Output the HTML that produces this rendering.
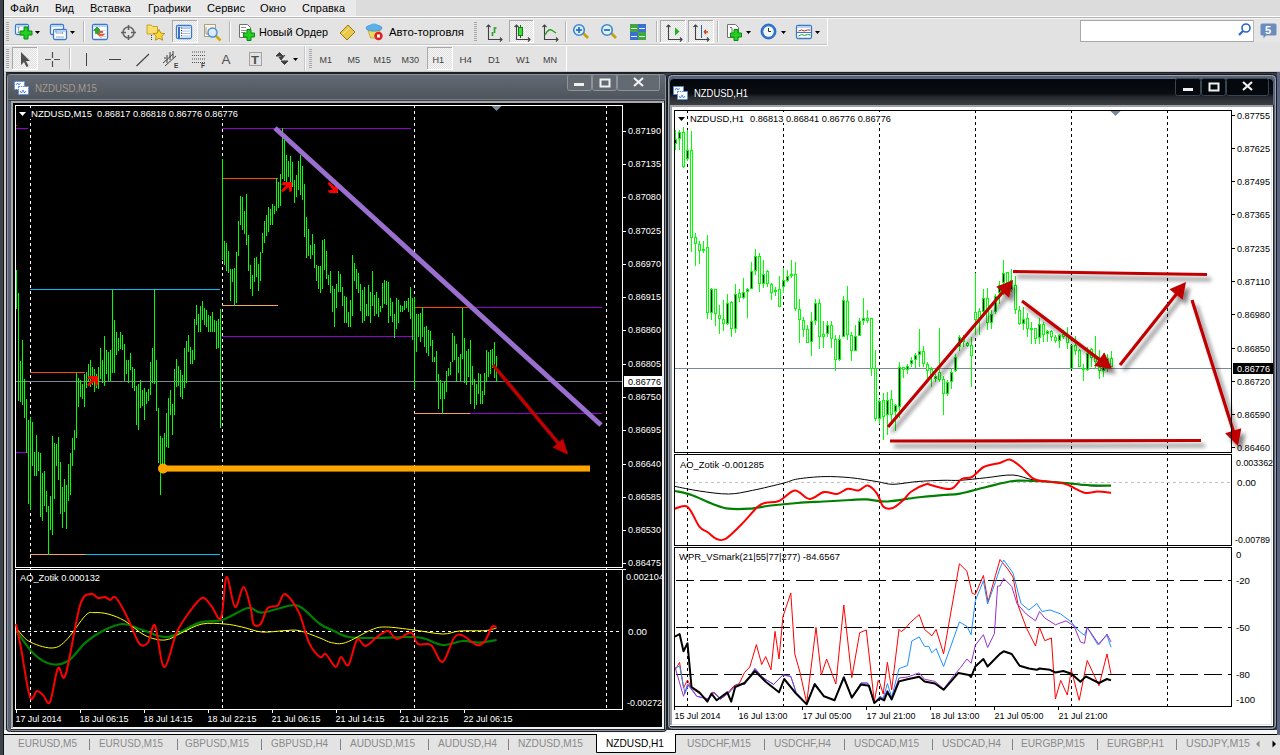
<!DOCTYPE html>
<html><head><meta charset="utf-8"><style>
html,body{margin:0;padding:0;width:1280px;height:755px;overflow:hidden;background:#dcdcdc}
svg{display:block;font-family:"Liberation Sans",sans-serif}
</style></head><body>
<svg width="1280" height="755" viewBox="0 0 1280 755">
<defs>
<filter id="sh" x="-20%" y="-30%" width="140%" height="160%"><feGaussianBlur in="SourceAlpha" stdDeviation="2.3"/><feOffset dx="4" dy="5"/><feComponentTransfer><feFuncA type="linear" slope="0.5"/></feComponentTransfer><feMerge><feMergeNode/><feMergeNode in="SourceGraphic"/></feMerge></filter>
<linearGradient id="gTitleL" x1="0" y1="0" x2="0" y2="1"><stop offset="0" stop-color="#646a73"/><stop offset="1" stop-color="#4e545c"/></linearGradient>
<linearGradient id="gTitleR" x1="0" y1="0" x2="0" y2="1"><stop offset="0" stop-color="#02050a"/><stop offset="0.5" stop-color="#0a0d12"/><stop offset="0.62" stop-color="#26292e"/><stop offset="1" stop-color="#45494f"/></linearGradient>
</defs>
<rect x="0" y="0" width="1280" height="755" fill="#dcdcdc" /><rect x="0" y="0" width="356" height="16" fill="#e9e9e9" /><rect x="356" y="0" width="924" height="16" fill="#dcdcdc" /><line x1="0" y1="16.5" x2="1280" y2="16.5" stroke="#ffffff" stroke-width="1" /><line x1="0" y1="17.5" x2="1280" y2="17.5" stroke="#b4b4b4" stroke-width="1" /><line x1="0" y1="18.5" x2="1280" y2="18.5" stroke="#f4f4f4" stroke-width="1" /><text x="10" y="12" fill="#000" font-size="11.5"  textLength="29" lengthAdjust="spacingAndGlyphs">Файл</text><text x="55" y="12" fill="#000" font-size="11.5"  textLength="19" lengthAdjust="spacingAndGlyphs">Вид</text><text x="90" y="12" fill="#000" font-size="11.5"  textLength="41" lengthAdjust="spacingAndGlyphs">Вставка</text><text x="148" y="12" fill="#000" font-size="11.5"  textLength="43" lengthAdjust="spacingAndGlyphs">Графики</text><text x="207" y="12" fill="#000" font-size="11.5"  textLength="38" lengthAdjust="spacingAndGlyphs">Сервис</text><text x="260" y="12" fill="#000" font-size="11.5"  textLength="26" lengthAdjust="spacingAndGlyphs">Окно</text><text x="302" y="12" fill="#000" font-size="11.5"  textLength="43" lengthAdjust="spacingAndGlyphs">Справка</text><rect x="0" y="19" width="1280" height="53" fill="#e2e2e2" /><rect x="4" y="19" width="824" height="25" fill="#e3e3e3" /><line x1="4" y1="44.5" x2="828" y2="44.5" stroke="#c4c4c4" stroke-width="1" /><line x1="4" y1="45.5" x2="828" y2="45.5" stroke="#ffffff" stroke-width="1" /><line x1="827.5" y1="19" x2="827.5" y2="45" stroke="#ffffff" stroke-width="1" /><rect x="4" y="46" width="563" height="25" fill="#e3e3e3" /><line x1="0" y1="71.5" x2="1280" y2="71.5" stroke="#c8c8c8" stroke-width="1" /><line x1="566.5" y1="46" x2="566.5" y2="71" stroke="#ffffff" stroke-width="1" /><line x1="304.5" y1="46" x2="304.5" y2="71" stroke="#c8c8c8" stroke-width="1" /><line x1="305.5" y1="46" x2="305.5" y2="71" stroke="#ffffff" stroke-width="1" /><line x1="6" y1="22.5" x2="9" y2="22.5" stroke="#a8a8a8" stroke-width="1" /><line x1="6" y1="24.5" x2="9" y2="24.5" stroke="#a8a8a8" stroke-width="1" /><line x1="6" y1="26.5" x2="9" y2="26.5" stroke="#a8a8a8" stroke-width="1" /><line x1="6" y1="28.5" x2="9" y2="28.5" stroke="#a8a8a8" stroke-width="1" /><line x1="6" y1="30.5" x2="9" y2="30.5" stroke="#a8a8a8" stroke-width="1" /><line x1="6" y1="32.5" x2="9" y2="32.5" stroke="#a8a8a8" stroke-width="1" /><line x1="6" y1="34.5" x2="9" y2="34.5" stroke="#a8a8a8" stroke-width="1" /><line x1="6" y1="36.5" x2="9" y2="36.5" stroke="#a8a8a8" stroke-width="1" /><line x1="6" y1="38.5" x2="9" y2="38.5" stroke="#a8a8a8" stroke-width="1" /><line x1="6" y1="40.5" x2="9" y2="40.5" stroke="#a8a8a8" stroke-width="1" /><line x1="6" y1="49.5" x2="9" y2="49.5" stroke="#a8a8a8" stroke-width="1" /><line x1="6" y1="51.5" x2="9" y2="51.5" stroke="#a8a8a8" stroke-width="1" /><line x1="6" y1="53.5" x2="9" y2="53.5" stroke="#a8a8a8" stroke-width="1" /><line x1="6" y1="55.5" x2="9" y2="55.5" stroke="#a8a8a8" stroke-width="1" /><line x1="6" y1="57.5" x2="9" y2="57.5" stroke="#a8a8a8" stroke-width="1" /><line x1="6" y1="59.5" x2="9" y2="59.5" stroke="#a8a8a8" stroke-width="1" /><line x1="6" y1="61.5" x2="9" y2="61.5" stroke="#a8a8a8" stroke-width="1" /><line x1="6" y1="63.5" x2="9" y2="63.5" stroke="#a8a8a8" stroke-width="1" /><line x1="6" y1="65.5" x2="9" y2="65.5" stroke="#a8a8a8" stroke-width="1" /><line x1="6" y1="67.5" x2="9" y2="67.5" stroke="#a8a8a8" stroke-width="1" /><line x1="309" y1="49.5" x2="312" y2="49.5" stroke="#a8a8a8" stroke-width="1" /><line x1="309" y1="51.5" x2="312" y2="51.5" stroke="#a8a8a8" stroke-width="1" /><line x1="309" y1="53.5" x2="312" y2="53.5" stroke="#a8a8a8" stroke-width="1" /><line x1="309" y1="55.5" x2="312" y2="55.5" stroke="#a8a8a8" stroke-width="1" /><line x1="309" y1="57.5" x2="312" y2="57.5" stroke="#a8a8a8" stroke-width="1" /><line x1="309" y1="59.5" x2="312" y2="59.5" stroke="#a8a8a8" stroke-width="1" /><line x1="309" y1="61.5" x2="312" y2="61.5" stroke="#a8a8a8" stroke-width="1" /><line x1="309" y1="63.5" x2="312" y2="63.5" stroke="#a8a8a8" stroke-width="1" /><line x1="309" y1="65.5" x2="312" y2="65.5" stroke="#a8a8a8" stroke-width="1" /><line x1="309" y1="67.5" x2="312" y2="67.5" stroke="#a8a8a8" stroke-width="1" /><line x1="474" y1="22.5" x2="477" y2="22.5" stroke="#a8a8a8" stroke-width="1" /><line x1="474" y1="24.5" x2="477" y2="24.5" stroke="#a8a8a8" stroke-width="1" /><line x1="474" y1="26.5" x2="477" y2="26.5" stroke="#a8a8a8" stroke-width="1" /><line x1="474" y1="28.5" x2="477" y2="28.5" stroke="#a8a8a8" stroke-width="1" /><line x1="474" y1="30.5" x2="477" y2="30.5" stroke="#a8a8a8" stroke-width="1" /><line x1="474" y1="32.5" x2="477" y2="32.5" stroke="#a8a8a8" stroke-width="1" /><line x1="474" y1="34.5" x2="477" y2="34.5" stroke="#a8a8a8" stroke-width="1" /><line x1="474" y1="36.5" x2="477" y2="36.5" stroke="#a8a8a8" stroke-width="1" /><line x1="474" y1="38.5" x2="477" y2="38.5" stroke="#a8a8a8" stroke-width="1" /><line x1="474" y1="40.5" x2="477" y2="40.5" stroke="#a8a8a8" stroke-width="1" /><line x1="83.5" y1="21" x2="83.5" y2="42" stroke="#b4b4b4" stroke-width="1" /><line x1="84.5" y1="21" x2="84.5" y2="42" stroke="#ffffff" stroke-width="1" /><line x1="229.5" y1="21" x2="229.5" y2="42" stroke="#b4b4b4" stroke-width="1" /><line x1="230.5" y1="21" x2="230.5" y2="42" stroke="#ffffff" stroke-width="1" /><line x1="565.5" y1="21" x2="565.5" y2="42" stroke="#b4b4b4" stroke-width="1" /><line x1="566.5" y1="21" x2="566.5" y2="42" stroke="#ffffff" stroke-width="1" /><line x1="656.5" y1="21" x2="656.5" y2="42" stroke="#b4b4b4" stroke-width="1" /><line x1="657.5" y1="21" x2="657.5" y2="42" stroke="#ffffff" stroke-width="1" /><line x1="717.5" y1="21" x2="717.5" y2="42" stroke="#b4b4b4" stroke-width="1" /><line x1="718.5" y1="21" x2="718.5" y2="42" stroke="#ffffff" stroke-width="1" /><line x1="69.5" y1="48" x2="69.5" y2="69" stroke="#b4b4b4" stroke-width="1" /><line x1="70.5" y1="48" x2="70.5" y2="69" stroke="#ffffff" stroke-width="1" /><defs><pattern id="dots" width="2" height="2" patternUnits="userSpaceOnUse"><rect width="2" height="2" fill="#f6f6f6"/><rect width="1" height="1" fill="#e0e0e0"/><rect x="1" y="1" width="1" height="1" fill="#e0e0e0"/></pattern></defs><rect x="172" y="20" width="26" height="23" fill="url(#dots)" /><line x1="172" y1="20.5" x2="198" y2="20.5" stroke="#a8a8a8" stroke-width="1" /><line x1="172.5" y1="20" x2="172.5" y2="43" stroke="#a8a8a8" stroke-width="1" /><line x1="172" y1="42.5" x2="198" y2="42.5" stroke="#ffffff" stroke-width="1" /><line x1="197.5" y1="20" x2="197.5" y2="43" stroke="#ffffff" stroke-width="1" /><rect x="509" y="20" width="25" height="23" fill="url(#dots)" /><line x1="509" y1="20.5" x2="534" y2="20.5" stroke="#a8a8a8" stroke-width="1" /><line x1="509.5" y1="20" x2="509.5" y2="43" stroke="#a8a8a8" stroke-width="1" /><line x1="509" y1="42.5" x2="534" y2="42.5" stroke="#ffffff" stroke-width="1" /><line x1="533.5" y1="20" x2="533.5" y2="43" stroke="#ffffff" stroke-width="1" /><rect x="660" y="20" width="26" height="23" fill="url(#dots)" /><line x1="660" y1="20.5" x2="686" y2="20.5" stroke="#a8a8a8" stroke-width="1" /><line x1="660.5" y1="20" x2="660.5" y2="43" stroke="#a8a8a8" stroke-width="1" /><line x1="660" y1="42.5" x2="686" y2="42.5" stroke="#ffffff" stroke-width="1" /><line x1="685.5" y1="20" x2="685.5" y2="43" stroke="#ffffff" stroke-width="1" /><rect x="688" y="20" width="26" height="23" fill="url(#dots)" /><line x1="688" y1="20.5" x2="714" y2="20.5" stroke="#a8a8a8" stroke-width="1" /><line x1="688.5" y1="20" x2="688.5" y2="43" stroke="#a8a8a8" stroke-width="1" /><line x1="688" y1="42.5" x2="714" y2="42.5" stroke="#ffffff" stroke-width="1" /><line x1="713.5" y1="20" x2="713.5" y2="43" stroke="#ffffff" stroke-width="1" /><rect x="12" y="47" width="26" height="23" fill="url(#dots)" /><line x1="12" y1="47.5" x2="38" y2="47.5" stroke="#a8a8a8" stroke-width="1" /><line x1="12.5" y1="47" x2="12.5" y2="70" stroke="#a8a8a8" stroke-width="1" /><line x1="12" y1="69.5" x2="38" y2="69.5" stroke="#ffffff" stroke-width="1" /><line x1="37.5" y1="47" x2="37.5" y2="70" stroke="#ffffff" stroke-width="1" /><rect x="427" y="47" width="26" height="23" fill="url(#dots)" /><line x1="427" y1="47.5" x2="453" y2="47.5" stroke="#a8a8a8" stroke-width="1" /><line x1="427.5" y1="47" x2="427.5" y2="70" stroke="#a8a8a8" stroke-width="1" /><line x1="427" y1="69.5" x2="453" y2="69.5" stroke="#ffffff" stroke-width="1" /><line x1="452.5" y1="47" x2="452.5" y2="70" stroke="#ffffff" stroke-width="1" /><rect x="15.5" y="24.5" width="13" height="10" rx="1.5" fill="#ffffff" stroke="#3a78c8" stroke-width="1.3"/><rect x="16" y="25" width="12" height="2" fill="#b8d4f4"/><path d="M18.5,27 v6 M17.5,28 l1,-1 1,1 M17.5,32 l1,1 1,-1" stroke="#7090b0" stroke-width="0.8" fill="none"/><path d="M24.0,27.0 h4 v4.0 h4.0 v4 h-4.0 v4.0 h-4 v-4.0 h-4.0 v-4 h4.0 z" fill="#22d022" stroke="#0a8a0a" stroke-width="1"/><path d="M35,31 h5 l-2.5,3 z" fill="#000"/><rect x="50.5" y="24.5" width="13" height="10" rx="1.5" fill="#ffffff" stroke="#3a78c8" stroke-width="1.3"/><rect x="51" y="25" width="12" height="2" fill="#b8d4f4"/><rect x="53.5" y="29.5" width="13" height="10" rx="1.5" fill="#ffffff" stroke="#3a78c8" stroke-width="1.3"/><rect x="54" y="30" width="12" height="2" fill="#b8d4f4"/><path d="M56,33 v-4 M55,30 l1,-1 1,1 M56,33 h7 M62,32 l1,1 -1,1 M56,37 h8" stroke="#7090b0" stroke-width="0.8" fill="none"/><path d="M70,31 h5 l-2.5,3 z" fill="#000"/><rect x="92.5" y="24.5" width="15" height="15" rx="1.5" fill="#ffffff" stroke="#3a78c8" stroke-width="1.3"/><rect x="93" y="25" width="14" height="2" fill="#b8d4f4"/><path d="M97,27 l3.5,3.5 h-2 v3 h-3 v-3 h-2 z" fill="#22b022" stroke="#107010" stroke-width="0.6"/><path d="M101,37.5 l3.5,-3.5 h-2 v-3 h-3 v3 h-2 z" fill="#f06030" stroke="#c03010" stroke-width="0.6"/><line x1="100" y1="30.5" x2="106" y2="30.5" stroke="#d0d8e0" stroke-width="1" /><line x1="100" y1="33.5" x2="106" y2="33.5" stroke="#d0d8e0" stroke-width="1" /><line x1="100" y1="36.5" x2="106" y2="36.5" stroke="#d0d8e0" stroke-width="1" /><circle cx="128.5" cy="32.5" r="5.5" fill="none" stroke="#686868" stroke-width="1.5"/><path d="M128.5,25 v5 M128.5,35 v5 M121,32.5 h5 M131,32.5 h5" stroke="#606060" stroke-width="1.5"/><path d="M147,25 h4 l1.5,1.5 h5 v7.5 h-10.5 z" fill="#f8e070" stroke="#c8a030" stroke-width="1"/><path d="M159,29.5 l1.8,3.6 3.9,0.5 -2.9,2.7 0.8,3.9 -3.6,-1.9 -3.6,1.9 0.8,-3.9 -2.9,-2.7 3.9,-0.5 z" fill="#f8d838" stroke="#b88a10" stroke-width="0.9"/><rect x="151" y="35" width="1" height="1" fill="#404040" /><rect x="151" y="37" width="1" height="1" fill="#404040" /><rect x="151" y="39" width="1" height="1" fill="#404040" /><rect x="176.5" y="25.5" width="15" height="13" rx="1.5" fill="#ffffff" stroke="#3a78c8" stroke-width="1.3"/><rect x="177" y="26" width="14" height="2" fill="#b8d4f4"/><rect x="178" y="27" width="2" height="11" fill="#3a70c0" /><line x1="181" y1="28.5" x2="190" y2="28.5" stroke="#a8c0e8" stroke-width="1" /><rect x="181" y="27.5" width="1" height="1" fill="#e02020" /><line x1="181" y1="31.0" x2="190" y2="31.0" stroke="#a8c0e8" stroke-width="1" /><rect x="181" y="30.0" width="1" height="1" fill="#202020" /><line x1="181" y1="33.5" x2="190" y2="33.5" stroke="#a8c0e8" stroke-width="1" /><rect x="181" y="32.5" width="1" height="1" fill="#202020" /><line x1="181" y1="36.0" x2="190" y2="36.0" stroke="#a8c0e8" stroke-width="1" /><rect x="181" y="35.0" width="1" height="1" fill="#e02020" /><rect x="204.5" y="24.5" width="11" height="12" fill="#f8f4e8" stroke="#b0a080"/><path d="M206,27 v7 h7" stroke="#909090" fill="none" stroke-width="0.8"/><path d="M215.5,35.5 l5,5" stroke="#d0a810" stroke-width="2.6"/><circle cx="212.5" cy="32.5" r="4.5" fill="#d8ecfc" fill-opacity="0.85" stroke="#4a90d8" stroke-width="1.4"/><path d="M239.5,24.5 h8 l3,3 v10 h-11 z" fill="#fff" stroke="#707070"/><line x1="241" y1="27.5" x2="246" y2="27.5" stroke="#909090" stroke-width="1" /><line x1="241" y1="30.5" x2="247" y2="30.5" stroke="#909090" stroke-width="1" /><line x1="241" y1="32.5" x2="245" y2="32.5" stroke="#909090" stroke-width="1" /><path d="M247.0,29.5 h4 v3.5 h3.5 v4 h-3.5 v3.5 h-4 v-3.5 h-3.5 v-4 h3.5 z" fill="#22d022" stroke="#0a8a0a" stroke-width="1"/><text x="259" y="36" fill="#000" font-size="11.5"  textLength="69" lengthAdjust="spacingAndGlyphs">Новый Ордер</text><path d="M340,33 l8,-8 l7,7 l-8,8 z" fill="#e8c848" stroke="#a07818" stroke-width="1"/><path d="M343,34 l6,-6" stroke="#f8e8a0" stroke-width="1"/><path d="M368,30 l12,0 l-1.5,8 h-8 z" fill="#f0d860" stroke="#c0a030" stroke-width="0.8"/><ellipse cx="374" cy="28" rx="8" ry="3.2" fill="#5ab0e8" stroke="#3080c0" stroke-width="0.6"/><ellipse cx="374" cy="26" rx="4" ry="2.6" fill="#5ab0e8"/><circle cx="378.5" cy="36" r="4.2" fill="#e02020"/><rect x="377" y="34.5" width="3" height="3" fill="#fff"/><text x="389" y="36" fill="#000" font-size="11.5"  textLength="75" lengthAdjust="spacingAndGlyphs">Авто-торговля</text><path d="M488.5,25 v14.5 h13.5 M486.5,27 l2,-2 2,2 M500,37.5 l2,2 -2,2" fill="none" stroke="#404040" stroke-width="1.1"/><path d="M492.5,36 v-4 M494.5,33 v-5 h2" fill="none" stroke="#20a020" stroke-width="1.6"/><path d="M516.5,25 v14.5 h13.5 M514.5,27 l2,-2 2,2 M528,37.5 l2,2 -2,2" fill="none" stroke="#404040" stroke-width="1.1"/><line x1="520.5" y1="25" x2="520.5" y2="38" stroke="#107010" stroke-width="1" /><rect x="518.5" y="27.5" width="4" height="8" fill="#40e040" stroke="#108010"/><path d="M544.5,25 v14.5 h13.5 M542.5,27 l2,-2 2,2 M556,37.5 l2,2 -2,2" fill="none" stroke="#404040" stroke-width="1.1"/><path d="M545,35 q4,-8 8,-4 l3,2" fill="none" stroke="#20a020" stroke-width="1.4"/><path d="M583,33 l5,5" stroke="#c8a010" stroke-width="2.8"/><circle cx="579" cy="30" r="5.3" fill="#e0f0ff" stroke="#3a88d0" stroke-width="1.6"/><path d="M576,30 h6" stroke="#2a70c0" stroke-width="1.8"/><path d="M579,27 v6" stroke="#2a70c0" stroke-width="1.8"/><path d="M611,33 l5,5" stroke="#c8a010" stroke-width="2.8"/><circle cx="607" cy="30" r="5.3" fill="#e0f0ff" stroke="#3a88d0" stroke-width="1.6"/><path d="M604,30 h6" stroke="#2a70c0" stroke-width="1.8"/><rect x="630" y="24" width="8" height="8" fill="#40a840" /><rect x="638" y="24" width="8" height="8" fill="#3a70d0" /><rect x="630" y="32" width="8" height="8" fill="#3a70d0" /><rect x="638" y="32" width="8" height="8" fill="#40a840" /><line x1="631" y1="28.5" x2="637" y2="28.5" stroke="#f0f0f0" stroke-width="1" /><line x1="639" y1="28.5" x2="645" y2="28.5" stroke="#f0f0f0" stroke-width="1" /><line x1="631" y1="36.5" x2="637" y2="36.5" stroke="#f0f0f0" stroke-width="1" /><line x1="639" y1="36.5" x2="645" y2="36.5" stroke="#f0f0f0" stroke-width="1" /><path d="M668.5,25 v14.5 h13.5 M666.5,27 l2,-2 2,2 M680,37.5 l2,2 -2,2" fill="none" stroke="#404040" stroke-width="1.1"/><path d="M675,27.5 l4.5,4 l-4.5,4 z" fill="#20b020"/><path d="M695.5,25 v14.5 h13.5 M693.5,27 l2,-2 2,2 M707,37.5 l2,2 -2,2" fill="none" stroke="#404040" stroke-width="1.1"/><line x1="701.5" y1="25" x2="701.5" y2="38" stroke="#2060b0" stroke-width="1" /><path d="M708,32 h-4 M704,32 l2,-2 M704,32 l2,2" stroke="#d04010" stroke-width="1.3" fill="none"/><path d="M727.5,24.5 h8 l3,3 v10 h-11 z" fill="#fff" stroke="#707070"/><path d="M730,28 q1,-2 2,0 v6" stroke="#606060" fill="none" stroke-width="0.9"/><path d="M734.0,29.5 h4 v3.5 h3.5 v4 h-3.5 v3.5 h-4 v-3.5 h-3.5 v-4 h3.5 z" fill="#22d022" stroke="#0a8a0a" stroke-width="1"/><path d="M746,31 h5 l-2.5,3 z" fill="#000"/><circle cx="768.5" cy="31.5" r="7.5" fill="#2a7ad8" stroke="#1a5ab0" stroke-width="0.8"/><circle cx="768.5" cy="31.5" r="5.2" fill="#f8f8f8"/><path d="M768.5,28 v3.5 h2.5" stroke="#303030" stroke-width="1" fill="none"/><path d="M781,31 h5 l-2.5,3 z" fill="#000"/><rect x="796.5" y="25.5" width="15" height="13" rx="1.5" fill="#ffffff" stroke="#3a78c8" stroke-width="1.3"/><rect x="797" y="26" width="14" height="2" fill="#b8d4f4"/><path d="M798.5,31 l3,-1 3,1 3,-1 3,0" stroke="#b03020" fill="none" stroke-width="1"/><path d="M798.5,36 l3,-1.5 3,1 3,-1 3,0.5" stroke="#20a020" fill="none" stroke-width="1"/><line x1="797" y1="32.5" x2="811" y2="32.5" stroke="#3a78c8" stroke-width="1" /><path d="M815,31 h5 l-2.5,3 z" fill="#000"/><rect x="1080.5" y="20.5" width="173" height="21" fill="#ffffff" stroke="#a8a8a8"/><circle cx="1246" cy="28" r="4" fill="none" stroke="#2a64c8" stroke-width="1.6"/><path d="M1243,31 l-4,4" stroke="#2a64c8" stroke-width="2.2"/><rect x="1254" y="20" width="26" height="22" fill="#e6e6e6" /><line x1="1253.5" y1="20" x2="1253.5" y2="42" stroke="#b8b8b8" stroke-width="1" /><path d="M1262,23.5 h13 a1.5,1.5 0 0 1 1.5,1.5 v9 a1.5,1.5 0 0 1 -1.5,1.5 h-9 l-2.5,3 v-3 h-1.5 a1.5,1.5 0 0 1 -1.5,-1.5 v-9 a1.5,1.5 0 0 1 1.5,-1.5 z" fill="#6c8cc0"/><text x="1265" y="34" fill="#fff" font-size="11" font-weight="bold">5</text><path d="M21,52 v13 l3,-3 l2.5,5 l2,-1 l-2.5,-5 h4 z" fill="#505050"/><path d="M52.5,52 v6 M52.5,61 v6 M45,59.5 h6 M54,59.5 h6" stroke="#505050" stroke-width="1.2"/><line x1="86.5" y1="53" x2="86.5" y2="66" stroke="#404040" stroke-width="1" /><line x1="109" y1="59.5" x2="121" y2="59.5" stroke="#404040" stroke-width="1" /><path d="M136.5,66 l12.5,-12" stroke="#404040" stroke-width="1.1"/><path d="M163,63 l10,-9 M165,66 l11,-10 M164,58 l2,0 M167,55 v8 M170,52 v8 M173,51 v7" stroke="#404040" stroke-width="1" fill="none"/><text x="174" y="68" fill="#404040" font-size="6.5" font-weight="bold">E</text><path d="M192,52 h13" stroke="#505050" stroke-width="1" stroke-dasharray="1,1"/><path d="M192,55.5 h13" stroke="#505050" stroke-width="1" stroke-dasharray="1,1"/><path d="M192,59 h13" stroke="#505050" stroke-width="1" stroke-dasharray="1,1"/><path d="M192,62.5 h13" stroke="#505050" stroke-width="1" stroke-dasharray="1,1"/><text x="201" y="68" fill="#404040" font-size="6.5" font-weight="bold">F</text><text x="221.5" y="64" fill="#505050" font-size="12"  textLength="9" lengthAdjust="spacingAndGlyphs">A</text><rect x="249.5" y="52.5" width="12" height="13" fill="none" stroke="#606060" stroke-dasharray="1,1"/><text x="251" y="63.5" fill="#505050" font-size="11" font-weight="bold" textLength="8" lengthAdjust="spacingAndGlyphs">T</text><path d="M276,56 l3.5,-3.5 3.5,3.5 z M281,61 l3.5,3.5 3.5,-3.5 z M279,57 l2,3 4,-5" fill="#404040" stroke="#404040" stroke-width="1"/><path d="M293,58 h5 l-2.5,3 z" fill="#000"/><text x="319.5" y="63" fill="#404040" font-size="9.5"  textLength="12.5" lengthAdjust="spacingAndGlyphs">M1</text><text x="347.5" y="63" fill="#404040" font-size="9.5"  textLength="12.5" lengthAdjust="spacingAndGlyphs">M5</text><text x="373.5" y="63" fill="#404040" font-size="9.5"  textLength="17.5" lengthAdjust="spacingAndGlyphs">M15</text><text x="401.5" y="63" fill="#404040" font-size="9.5"  textLength="17.5" lengthAdjust="spacingAndGlyphs">M30</text><text x="432.5" y="63" fill="#404040" font-size="9.5"  textLength="11.5" lengthAdjust="spacingAndGlyphs">H1</text><text x="459.5" y="63" fill="#404040" font-size="9.5"  textLength="12.5" lengthAdjust="spacingAndGlyphs">H4</text><text x="488" y="63" fill="#404040" font-size="9.5"  textLength="12" lengthAdjust="spacingAndGlyphs">D1</text><text x="516" y="63" fill="#404040" font-size="9.5"  textLength="14" lengthAdjust="spacingAndGlyphs">W1</text><text x="543" y="63" fill="#404040" font-size="9.5"  textLength="14" lengthAdjust="spacingAndGlyphs">MN</text><rect x="0" y="72" width="1280" height="661" fill="#3a3f47" /><line x1="0" y1="72.5" x2="1280" y2="72.5" stroke="#1c1f24" stroke-width="1" /><rect x="4" y="72" width="2" height="661" fill="#c8c8c8" /><rect x="0" y="730" width="1280" height="4" fill="#f6f6f6" /><rect x="0" y="735" width="1280" height="20" fill="#e3e3e3" /><line x1="4" y1="734.5" x2="1280" y2="734.5" stroke="#000000" stroke-width="1" /><rect x="0" y="0" width="4" height="755" fill="#3e434b" /><line x1="3.5" y1="0" x2="3.5" y2="755" stroke="#121418" stroke-width="1" /><rect x="1277" y="72" width="3" height="663" fill="#5a6480" /><line x1="89.5" y1="739" x2="89.5" y2="750" stroke="#808080" stroke-width="1" /><line x1="177.5" y1="739" x2="177.5" y2="750" stroke="#808080" stroke-width="1" /><line x1="261.5" y1="739" x2="261.5" y2="750" stroke="#808080" stroke-width="1" /><line x1="340.5" y1="739" x2="340.5" y2="750" stroke="#808080" stroke-width="1" /><line x1="428.5" y1="739" x2="428.5" y2="750" stroke="#808080" stroke-width="1" /><line x1="508.5" y1="739" x2="508.5" y2="750" stroke="#808080" stroke-width="1" /><line x1="764.5" y1="739" x2="764.5" y2="750" stroke="#808080" stroke-width="1" /><line x1="844.5" y1="739" x2="844.5" y2="750" stroke="#808080" stroke-width="1" /><line x1="932.5" y1="739" x2="932.5" y2="750" stroke="#808080" stroke-width="1" /><line x1="1012.5" y1="739" x2="1012.5" y2="750" stroke="#808080" stroke-width="1" /><line x1="1097.5" y1="739" x2="1097.5" y2="750" stroke="#808080" stroke-width="1" /><line x1="1176.5" y1="739" x2="1176.5" y2="750" stroke="#808080" stroke-width="1" /><text x="18" y="747" fill="#8a8a8a" font-size="11.5"  textLength="59" lengthAdjust="spacingAndGlyphs">EURUSD,M5</text><text x="99" y="747" fill="#8a8a8a" font-size="11.5"  textLength="64" lengthAdjust="spacingAndGlyphs">EURUSD,M15</text><text x="185" y="747" fill="#8a8a8a" font-size="11.5"  textLength="64" lengthAdjust="spacingAndGlyphs">GBPUSD,M15</text><text x="271" y="747" fill="#8a8a8a" font-size="11.5"  textLength="57" lengthAdjust="spacingAndGlyphs">GBPUSD,H4</text><text x="350" y="747" fill="#8a8a8a" font-size="11.5"  textLength="65" lengthAdjust="spacingAndGlyphs">AUDUSD,M15</text><text x="438" y="747" fill="#8a8a8a" font-size="11.5"  textLength="59" lengthAdjust="spacingAndGlyphs">AUDUSD,H4</text><text x="518" y="747" fill="#8a8a8a" font-size="11.5"  textLength="65" lengthAdjust="spacingAndGlyphs">NZDUSD,M15</text><rect x="596" y="733" width="80" height="20" fill="#ffffff" /><path d="M596.5,734 v18.5 h79 v-18.5" fill="none" stroke="#000" stroke-width="1"/><text x="606" y="747" fill="#000" font-size="11.5"  textLength="58" lengthAdjust="spacingAndGlyphs">NZDUSD,H1</text><text x="687" y="747" fill="#8a8a8a" font-size="11.5"  textLength="64" lengthAdjust="spacingAndGlyphs">USDCHF,M15</text><text x="774" y="747" fill="#8a8a8a" font-size="11.5"  textLength="57" lengthAdjust="spacingAndGlyphs">USDCHF,H4</text><text x="854" y="747" fill="#8a8a8a" font-size="11.5"  textLength="65" lengthAdjust="spacingAndGlyphs">USDCAD,M15</text><text x="942" y="747" fill="#8a8a8a" font-size="11.5"  textLength="59" lengthAdjust="spacingAndGlyphs">USDCAD,H4</text><text x="1021" y="747" fill="#8a8a8a" font-size="11.5"  textLength="64" lengthAdjust="spacingAndGlyphs">EURGBP,M15</text><text x="1107" y="747" fill="#8a8a8a" font-size="11.5"  textLength="57" lengthAdjust="spacingAndGlyphs">EURGBP,H1</text><text x="1186" y="747" fill="#8a8a8a" font-size="11.5"  textLength="64" lengthAdjust="spacingAndGlyphs">USDJPY,M15</text><path d="M1256,744 l3.5,-3.5 v7 z" fill="#909090"/><path d="M1272.5,740.5 l3.5,3.5 -3.5,3.5 z" fill="#000"/><rect x="6.5" y="73.5" width="660" height="658" rx="3" fill="#58627a" stroke="#1e2126"/><rect x="7.5" y="74.5" width="658" height="656" rx="3" fill="none" stroke="#8a919c"/><rect x="8" y="75" width="657" height="25" fill="url(#gTitleL)" /><line x1="8" y1="99.5" x2="665" y2="99.5" stroke="#767c84" stroke-width="1" /><line x1="8" y1="100.5" x2="665" y2="100.5" stroke="#3a3f47" stroke-width="1" /><rect x="567.5" y="74.5" width="24" height="16" rx="2" fill="#646a72" stroke="#8e949c"/><rect x="592.5" y="74.5" width="24" height="16" rx="2" fill="#646a72" stroke="#8e949c"/><rect x="617.5" y="74.5" width="42" height="16" rx="2" fill="#646a72" stroke="#8e949c"/><rect x="574" y="83" width="10" height="3" fill="#f0f0f0" /><rect x="600.5" y="79.5" width="9" height="7" fill="none" stroke="#f0f0f0" stroke-width="2"/><path d="M634,78 l9,8 M643,78 l-9,8" stroke="#f0f0f0" stroke-width="2.2"/><rect x="14.5" y="81.5" width="10" height="8" fill="#fff" stroke="#4a8af0" stroke-dasharray="1.5,0.8"/><rect x="18.5" y="86.5" width="10" height="8" fill="#fff" stroke="#4a8af0" stroke-dasharray="1.5,0.8"/><path d="M20,91 l1.5,2 1.5,-3 1.5,3 1.5,-2" fill="none" stroke="#3a6ad0" stroke-width="0.8"/><path d="M16,85 l1.5,-2 1.5,2 1.5,-2" fill="none" stroke="#3a6ad0" stroke-width="0.8"/><text x="35" y="92" fill="#a39a8c" font-size="11"  textLength="62" lengthAdjust="spacingAndGlyphs">NZDUSD,M15</text><rect x="10" y="101" width="1" height="631" fill="#5a606a" /><rect x="11" y="101" width="653" height="628" fill="#f0f0f0" /><rect x="11" y="101" width="653" height="2" fill="#a8a8a8" /><rect x="11" y="101" width="2" height="627" fill="#a8a8a8" /><rect x="13" y="103" width="649" height="624" fill="#000000" /><line x1="11" y1="729.5" x2="665" y2="729.5" stroke="#202328" stroke-width="1" /><line x1="664.5" y1="101" x2="664.5" y2="730" stroke="#202328" stroke-width="1" /><rect x="667.5" y="74.5" width="609" height="655" rx="4" fill="#58627a" stroke="#15181c"/><rect x="668.5" y="75.5" width="607" height="653" rx="4" fill="none" stroke="#9aa0a8"/><rect x="669.5" y="78.5" width="604" height="30" rx="4" fill="url(#gTitleR)" stroke="#5a6a80"/><rect x="1175.5" y="78.5" width="25" height="17" rx="2" fill="#05080c" stroke="#3c4450"/><rect x="1201.5" y="78.5" width="24" height="17" rx="2" fill="#05080c" stroke="#3c4450"/><rect x="1226.5" y="78.5" width="42" height="17" rx="2" fill="#05080c" stroke="#3c4450"/><rect x="1183" y="88" width="10" height="3" fill="#f0f0f0" /><rect x="1209.5" y="83.5" width="9" height="7" fill="none" stroke="#f0f0f0" stroke-width="2"/><path d="M1243,82 l9,8 M1252,82 l-9,8" stroke="#f0f0f0" stroke-width="2.2"/><rect x="673.5" y="86.5" width="10" height="8" fill="#fff" stroke="#4a8af0" stroke-dasharray="1.5,0.8"/><rect x="677.5" y="91.5" width="10" height="8" fill="#fff" stroke="#4a8af0" stroke-dasharray="1.5,0.8"/><path d="M679,96 l1.5,2 1.5,-3 1.5,3 1.5,-2" fill="none" stroke="#3a6ad0" stroke-width="0.8"/><path d="M675,90 l1.5,-2 1.5,2 1.5,-2" fill="none" stroke="#3a6ad0" stroke-width="0.8"/><text x="694" y="97" fill="#ffffff" font-size="11"  textLength="54" lengthAdjust="spacingAndGlyphs">NZDUSD,H1</text><rect x="670" y="105" width="603" height="621" fill="#ffffff" /><rect x="670" y="105" width="603" height="2" fill="#a0a0a0" /><rect x="670" y="105" width="2" height="620" fill="#a0a0a0" /><line x1="672" y1="724.5" x2="1272" y2="724.5" stroke="#e0e0e0" stroke-width="1" /><line x1="1271.5" y1="107" x2="1271.5" y2="725" stroke="#e0e0e0" stroke-width="1" /><line x1="670" y1="726.5" x2="1274" y2="726.5" stroke="#202328" stroke-width="1" /><line x1="1273.5" y1="105" x2="1273.5" y2="727" stroke="#202328" stroke-width="1" /><g stroke="#ffffff" stroke-width="1" stroke-dasharray="3,3" stroke-dashoffset="1" shape-rendering="crispEdges"><line x1="30.5" y1="106" x2="30.5" y2="709"/><line x1="222.5" y1="106" x2="222.5" y2="709"/><line x1="414.5" y1="106" x2="414.5" y2="709"/><line x1="606.5" y1="106" x2="606.5" y2="709"/></g><line x1="16" y1="631.5" x2="622" y2="631.5" stroke="#ffffff" stroke-dasharray="3,3" shape-rendering="crispEdges"/><line x1="16" y1="381.5" x2="622" y2="381.5" stroke="#778899" shape-rendering="crispEdges"/><line x1="16" y1="128.5" x2="28" y2="128.5" stroke="#9400d3" stroke-width="1" shape-rendering="crispEdges"/><line x1="222" y1="128.5" x2="411" y2="128.5" stroke="#9400d3" stroke-width="1" shape-rendering="crispEdges"/><line x1="30" y1="289.5" x2="220" y2="289.5" stroke="#00bfff" stroke-width="1" shape-rendering="crispEdges"/><line x1="222" y1="178.5" x2="278" y2="178.5" stroke="#ff4500" stroke-width="1" shape-rendering="crispEdges"/><line x1="222" y1="305.5" x2="278" y2="305.5" stroke="#f4a460" stroke-width="1" shape-rendering="crispEdges"/><line x1="222" y1="336.5" x2="414" y2="336.5" stroke="#9400d3" stroke-width="1" shape-rendering="crispEdges"/><line x1="30" y1="372.5" x2="85" y2="372.5" stroke="#ff4500" stroke-width="1" shape-rendering="crispEdges"/><line x1="16" y1="452.5" x2="28" y2="452.5" stroke="#9400d3" stroke-width="1" shape-rendering="crispEdges"/><line x1="30" y1="554.5" x2="86" y2="554.5" stroke="#f4a460" stroke-width="1" shape-rendering="crispEdges"/><line x1="86" y1="554.5" x2="220" y2="554.5" stroke="#00bfff" stroke-width="1" shape-rendering="crispEdges"/><line x1="414" y1="307.5" x2="468" y2="307.5" stroke="#ff4500" stroke-width="1" shape-rendering="crispEdges"/><line x1="468" y1="307.5" x2="602" y2="307.5" stroke="#9400d3" stroke-width="1" shape-rendering="crispEdges"/><line x1="414" y1="413.5" x2="470" y2="413.5" stroke="#f4a460" stroke-width="1" shape-rendering="crispEdges"/><line x1="470" y1="413.5" x2="602" y2="413.5" stroke="#9400d3" stroke-width="1" shape-rendering="crispEdges"/><rect x="16" y="125" width="1" height="1" fill="#ff0000"/><path d="M16.5,270V309M18.5,293V401M20.5,361V402M22.5,340V405M24.5,379V418M26.5,399V453M28.5,420V504M30.5,417V510M32.5,422V466M34.5,452V476M36.5,435V476M38.5,452V471M40.5,453V517M42.5,473V521M44.5,471V506M46.5,491V512M48.5,506V555M50.5,496V530M52.5,436V535M54.5,443V499M56.5,444V466M58.5,437V480M60.5,462V514M62.5,487V528M64.5,479V512M66.5,485V529M68.5,464V501M70.5,453V495M72.5,438V466M74.5,430V450M76.5,373V438M78.5,378V407M80.5,380V397M82.5,384V399M84.5,374V407M86.5,372V388M88.5,364V381M90.5,360V387M92.5,367V385M94.5,369V392M96.5,374V388M98.5,367V389M100.5,348V379M102.5,360V383M104.5,336V386M106.5,350V374M108.5,352V381M110.5,350V381M112.5,290V373M114.5,320V373M116.5,332V355M118.5,338V351M120.5,332V349M122.5,335V350M124.5,344V381M126.5,360V374M128.5,360V383M130.5,353V370M132.5,367V388M134.5,369V391M136.5,386V425M138.5,384V430M140.5,380V408M142.5,390V406M144.5,388V420M146.5,392V404M148.5,389V401M150.5,362V395M152.5,348V383M154.5,290V384M156.5,360V411M158.5,408V463M160.5,436V495M162.5,438V465M164.5,433V465M166.5,413V447M168.5,398V448M170.5,390V415M172.5,404V435M174.5,369V415M176.5,359V387M178.5,366V386M180.5,370V397M182.5,375V399M184.5,348V388M186.5,341V383M188.5,335V352M190.5,347V364M192.5,350V364M194.5,319V360M196.5,305V325M198.5,314V332M200.5,306V332M202.5,301V320M204.5,308V325M206.5,310V327M208.5,315V332M210.5,316V332M212.5,312V332M214.5,320V332M216.5,321V349M218.5,319V348M220.5,309V428M222.5,159V260M224.5,241V265M226.5,243V271M228.5,251V273M230.5,269V301M232.5,269V282M234.5,268V306M236.5,252V303M238.5,221V256M240.5,196V225M242.5,197V230M244.5,211V234M246.5,194V245M248.5,235V271M250.5,265V289M252.5,275V296M254.5,258V282M256.5,257V277M258.5,264V291M260.5,252V281M262.5,233V253M264.5,221V243M266.5,215V236M268.5,207V232M270.5,209V225M272.5,204V225M274.5,206V214M276.5,178V211M278.5,182V208M280.5,174V206M282.5,128V179M284.5,140V181M286.5,155V182M288.5,161V177M290.5,156V185M292.5,162V187M294.5,180V203M296.5,175V197M298.5,161V190M300.5,155V195M302.5,166V200M304.5,184V237M306.5,217V258M308.5,229V256M310.5,245V259M312.5,234V255M314.5,244V268M316.5,265V281M318.5,266V289M320.5,266V293M322.5,240V289M324.5,239V270M326.5,251V279M328.5,275V285M330.5,271V293M332.5,286V312M334.5,289V327M336.5,284V308M338.5,271V292M340.5,274V292M342.5,287V306M344.5,296V323M346.5,297V323M348.5,312V327M350.5,300V327M352.5,255V316M354.5,263V281M356.5,269V289M358.5,273V293M360.5,284V311M362.5,290V323M364.5,287V321M366.5,304V316M368.5,285V316M370.5,292V323M372.5,271V306M374.5,295V316M376.5,292V314M378.5,298V317M380.5,306V312M382.5,283V308M384.5,280V304M386.5,281V305M388.5,282V323M390.5,298V316M392.5,302V322M394.5,314V338M396.5,298V329M398.5,300V323M400.5,305V312M402.5,306V312M404.5,301V310M406.5,301V308M408.5,298V312M410.5,287V319M412.5,298V340M414.5,297V389M416.5,314V352M418.5,314V337M420.5,313V342M422.5,307V337M424.5,327V347M426.5,326V353M428.5,330V356M430.5,331V346M432.5,340V362M434.5,357V362M436.5,351V382M438.5,374V409M440.5,380V399M442.5,383V414M444.5,381V399M446.5,371V392M448.5,368V376M450.5,362V375M452.5,333V362M454.5,336V360M456.5,344V382M458.5,357V373M460.5,354V382M462.5,308V359M464.5,338V383M466.5,351V385M468.5,349V377M470.5,340V404M472.5,366V385M474.5,379V409M476.5,384V405M478.5,373V394M480.5,374V404M482.5,391V404M484.5,373V395M486.5,350V382M488.5,352V377M490.5,350V374M492.5,349V368M494.5,342V378M496.5,356V382" stroke="#00ff00" stroke-width="1" fill="none" shape-rendering="crispEdges"/><g filter="url(#sh)"><line x1="163" y1="468.5" x2="590" y2="468.5" stroke="#ffa500" stroke-width="6"/><circle cx="163" cy="468.5" r="5" fill="#ffa500"/></g><g filter="url(#sh)"><line x1="493" y1="365" x2="559" y2="444" stroke="#c00000" stroke-width="3.5"/><path d="M568,454.5 L552.5,447.5 L563,438.5 Z" fill="#c00000"/></g><path transform="translate(98,376) rotate(0)" d="M-9.0,0.0 L0.0,0.0 L0.0,8.5 L-2.5,10.5 L-3.3,5.0 L-9.5,10.5 L-11.0,8.5 L-5.5,3.0 L-11.0,3.0 Z" fill="#ff0000"/><path transform="translate(292,182) rotate(0)" d="M-9.0,0.0 L0.0,0.0 L0.0,8.5 L-2.5,10.5 L-3.3,5.0 L-9.5,10.5 L-11.0,8.5 L-5.5,3.0 L-11.0,3.0 Z" fill="#ff0000"/><path transform="translate(338,193) rotate(90)" d="M-9.0,0.0 L0.0,0.0 L0.0,8.5 L-2.5,10.5 L-3.3,5.0 L-9.5,10.5 L-11.0,8.5 L-5.5,3.0 L-11.0,3.0 Z" fill="#ff0000"/><line x1="275" y1="128" x2="601" y2="425" stroke="#9b6fd0" stroke-width="5"/><g fill="none" stroke="#ffffff" shape-rendering="crispEdges"><rect x="15.5" y="105.5" width="607" height="462"/><rect x="15.5" y="569.5" width="607" height="140"/></g><path d="M491.5,106 h10 l-5,5 z" fill="#778899"/><rect x="30" y="108" width="210" height="11" fill="#000000" /><path d="M19,112 h7 l-3.5,4 z" fill="#fff"/><text x="31" y="117" fill="#ffffff" font-size="9.6"  textLength="61" lengthAdjust="spacingAndGlyphs">NZDUSD,M15</text><text x="97" y="117" fill="#ffffff" font-size="9.6"  textLength="141" lengthAdjust="spacingAndGlyphs">0.86817 0.86818 0.86776 0.86776</text><line x1="622" y1="131.5" x2="626" y2="131.5" stroke="#fff" shape-rendering="crispEdges"/><text x="628" y="134" fill="#ffffff" font-size="9.6"  textLength="33" lengthAdjust="spacingAndGlyphs">0.87190</text><line x1="622" y1="164.5" x2="626" y2="164.5" stroke="#fff" shape-rendering="crispEdges"/><text x="628" y="167" fill="#ffffff" font-size="9.6"  textLength="33" lengthAdjust="spacingAndGlyphs">0.87135</text><line x1="622" y1="197.5" x2="626" y2="197.5" stroke="#fff" shape-rendering="crispEdges"/><text x="628" y="200" fill="#ffffff" font-size="9.6"  textLength="33" lengthAdjust="spacingAndGlyphs">0.87080</text><line x1="622" y1="231.5" x2="626" y2="231.5" stroke="#fff" shape-rendering="crispEdges"/><text x="628" y="234" fill="#ffffff" font-size="9.6"  textLength="33" lengthAdjust="spacingAndGlyphs">0.87025</text><line x1="622" y1="264.5" x2="626" y2="264.5" stroke="#fff" shape-rendering="crispEdges"/><text x="628" y="267" fill="#ffffff" font-size="9.6"  textLength="33" lengthAdjust="spacingAndGlyphs">0.86970</text><line x1="622" y1="297.5" x2="626" y2="297.5" stroke="#fff" shape-rendering="crispEdges"/><text x="628" y="300" fill="#ffffff" font-size="9.6"  textLength="33" lengthAdjust="spacingAndGlyphs">0.86915</text><line x1="622" y1="330.5" x2="626" y2="330.5" stroke="#fff" shape-rendering="crispEdges"/><text x="628" y="333" fill="#ffffff" font-size="9.6"  textLength="33" lengthAdjust="spacingAndGlyphs">0.86860</text><line x1="622" y1="364.5" x2="626" y2="364.5" stroke="#fff" shape-rendering="crispEdges"/><text x="628" y="367" fill="#ffffff" font-size="9.6"  textLength="33" lengthAdjust="spacingAndGlyphs">0.86805</text><line x1="622" y1="397.5" x2="626" y2="397.5" stroke="#fff" shape-rendering="crispEdges"/><text x="628" y="400" fill="#ffffff" font-size="9.6"  textLength="33" lengthAdjust="spacingAndGlyphs">0.86750</text><line x1="622" y1="430.5" x2="626" y2="430.5" stroke="#fff" shape-rendering="crispEdges"/><text x="628" y="433" fill="#ffffff" font-size="9.6"  textLength="33" lengthAdjust="spacingAndGlyphs">0.86695</text><line x1="622" y1="464.5" x2="626" y2="464.5" stroke="#fff" shape-rendering="crispEdges"/><text x="628" y="467" fill="#ffffff" font-size="9.6"  textLength="33" lengthAdjust="spacingAndGlyphs">0.86640</text><line x1="622" y1="497.5" x2="626" y2="497.5" stroke="#fff" shape-rendering="crispEdges"/><text x="628" y="500" fill="#ffffff" font-size="9.6"  textLength="33" lengthAdjust="spacingAndGlyphs">0.86585</text><line x1="622" y1="530.5" x2="626" y2="530.5" stroke="#fff" shape-rendering="crispEdges"/><text x="628" y="533" fill="#ffffff" font-size="9.6"  textLength="33" lengthAdjust="spacingAndGlyphs">0.86530</text><line x1="622" y1="563.5" x2="626" y2="563.5" stroke="#fff" shape-rendering="crispEdges"/><text x="628" y="566" fill="#ffffff" font-size="9.6"  textLength="33" lengthAdjust="spacingAndGlyphs">0.86475</text><rect x="624" y="376" width="38" height="11" fill="#ffffff" /><text x="628" y="385" fill="#000000" font-size="9.6"  textLength="33" lengthAdjust="spacingAndGlyphs">0.86776</text><line x1="622" y1="569.5" x2="626" y2="569.5" stroke="#fff" shape-rendering="crispEdges"/><text x="626" y="580" fill="#ffffff" font-size="9.6"  textLength="38" lengthAdjust="spacingAndGlyphs">0.002104</text><text x="628" y="635" fill="#ffffff" font-size="9.6"  textLength="19" lengthAdjust="spacingAndGlyphs">0.00</text><text x="627" y="706" fill="#ffffff" font-size="9.6"  textLength="35" lengthAdjust="spacingAndGlyphs">-0.00272</text><text x="20" y="581" fill="#ffffff" font-size="9.6"  textLength="80" lengthAdjust="spacingAndGlyphs">AO_Zotik 0.000132</text><path d="M16.5,631.0 C19.4,634.8 28.2,648.5 34.0,654.0 C39.8,659.5 45.3,662.8 51.0,664.0 C56.7,665.2 62.2,664.6 68.0,661.0 C73.8,657.4 79.7,647.6 85.5,642.6 C91.3,637.6 96.4,634.1 102.6,631.0 C108.8,627.9 115.8,624.2 122.5,624.0 C129.2,623.8 134.9,627.8 142.5,630.0 C150.1,632.2 158.5,638.2 168.0,637.0 C177.5,635.8 190.4,625.4 199.4,622.6 C208.4,619.8 213.9,622.4 222.0,620.0 C230.1,617.6 241.3,609.2 248.0,608.0 C254.7,606.8 254.9,613.0 262.0,612.6 C269.1,612.2 283.9,606.3 290.6,605.5 C297.3,604.7 297.1,604.9 302.0,608.0 C306.9,611.1 314.7,620.2 320.0,624.0 C325.3,627.8 329.2,628.8 334.0,631.0 C338.8,633.2 341.3,635.8 348.5,637.0 C355.7,638.2 367.5,638.0 377.0,638.0 C386.5,638.0 397.9,637.0 405.5,637.0 C413.1,637.0 416.4,636.7 422.6,638.0 C428.8,639.3 435.9,644.5 442.5,645.0 C449.1,645.5 456.3,641.4 462.5,641.0 C468.7,640.6 473.8,642.8 479.5,642.6 C485.2,642.4 493.8,640.4 496.6,640.0" fill="none" stroke="#008000" stroke-width="2.2" stroke-linejoin="round" /><path d="M16.5,628.0 C18.5,630.2 22.8,637.7 28.5,641.0 C34.2,644.3 44.8,648.0 51.0,648.0 C57.2,648.0 59.8,646.4 65.5,641.0 C71.2,635.6 80.8,620.2 85.5,615.5 C90.2,610.8 90.2,612.9 94.0,612.6 C97.8,612.4 102.8,612.6 108.0,614.0 C113.2,615.4 118.8,617.4 125.0,621.0 C131.2,624.6 138.3,632.2 145.0,635.4 C151.7,638.6 158.8,640.5 165.0,640.0 C171.2,639.5 175.8,635.3 182.0,632.6 C188.2,629.9 194.8,625.4 202.0,624.0 C209.2,622.6 218.3,623.5 225.0,624.0 C231.7,624.5 235.8,625.7 242.0,627.0 C248.2,628.3 254.8,631.4 262.0,632.0 C269.2,632.6 278.8,630.8 285.0,630.6 C291.2,630.4 293.2,629.4 299.0,630.6 C304.8,631.8 314.6,636.0 320.0,638.0 C325.4,640.0 327.1,641.8 331.4,642.6 C335.7,643.4 339.0,644.7 345.6,642.6 C352.2,640.5 364.4,632.6 371.0,630.0 C377.6,627.4 378.3,627.0 385.5,627.0 C392.7,627.0 404.5,628.8 414.0,630.0 C423.5,631.2 434.9,633.8 442.5,634.0 C450.1,634.2 452.5,631.6 459.6,631.0 C466.7,630.4 478.8,631.1 485.0,630.6 C491.2,630.1 494.7,628.4 496.6,628.0" fill="none" stroke="#ffff00" stroke-width="1" stroke-linejoin="round" /><path d="M16.0,624.0 C16.8,628.0 18.7,635.8 21.0,648.0 C23.3,660.2 27.3,689.8 30.0,697.0 C32.7,704.2 34.8,691.3 37.0,691.0 C39.2,690.7 40.8,693.2 43.0,695.0 C45.2,696.8 47.5,706.5 50.0,702.0 C52.5,697.5 55.4,672.5 58.0,668.0 C60.6,663.5 61.8,685.4 65.5,675.0 C69.2,664.6 75.8,619.0 80.0,605.5 C84.2,592.0 88.0,595.2 91.0,594.0 C94.0,592.8 95.7,597.5 98.0,598.0 C100.3,598.5 103.0,596.7 105.0,597.0 C107.0,597.3 108.3,600.0 110.0,600.0 C111.7,600.0 112.9,595.7 115.0,597.0 C117.1,598.3 119.8,603.2 122.5,608.0 C125.2,612.8 128.2,619.5 131.0,625.5 C133.8,631.5 136.8,641.1 139.6,644.0 C142.4,646.9 145.4,645.7 148.0,642.6 C150.6,639.5 152.3,621.4 155.0,625.5 C157.7,629.6 160.4,665.8 164.0,667.0 C167.6,668.2 172.6,641.4 176.6,632.6 C180.6,623.8 183.8,619.8 188.0,614.0 C192.2,608.2 198.2,599.4 202.0,598.0 C205.8,596.6 207.8,602.2 211.0,605.5 C214.2,608.8 218.4,622.8 221.0,618.0 C223.6,613.2 224.2,578.8 226.5,577.0 C228.8,575.2 232.2,605.3 235.0,607.0 C237.8,608.7 241.0,586.8 243.6,587.0 C246.2,587.2 249.0,601.8 250.7,608.0 C252.4,614.2 251.9,621.3 253.6,624.0 C255.3,626.7 258.3,626.7 260.7,624.0 C263.1,621.3 264.9,611.1 267.8,608.0 C270.7,604.9 274.9,607.8 277.8,605.5 C280.7,603.2 281.5,592.8 285.0,594.0 C288.5,595.2 295.0,604.5 299.0,612.6 C303.0,620.7 305.5,635.2 309.0,642.6 C312.5,650.0 317.2,655.1 320.0,657.0 C322.8,658.9 323.1,652.3 325.7,654.0 C328.3,655.7 333.1,666.5 335.7,667.0 C338.2,667.5 338.9,657.3 341.0,657.0 C343.1,656.7 345.8,667.8 348.5,665.0 C351.2,662.2 354.1,643.2 357.0,640.0 C359.9,636.8 362.3,646.5 365.6,646.0 C368.9,645.5 373.3,639.5 377.0,637.0 C380.7,634.5 384.7,630.7 388.0,631.0 C391.3,631.3 393.2,638.7 397.0,639.0 C400.8,639.3 407.5,631.8 411.0,632.6 C414.5,633.4 414.7,641.9 418.0,644.0 C421.3,646.1 426.9,642.0 431.0,645.0 C435.1,648.0 438.7,663.2 442.5,662.0 C446.3,660.8 450.7,642.4 454.0,638.0 C457.3,633.6 458.7,634.2 462.5,635.4 C466.3,636.6 472.9,644.1 476.7,645.0 C480.4,645.9 482.4,644.0 485.0,641.0 C487.6,638.0 490.1,629.3 492.0,627.0 C493.9,624.7 495.8,627.0 496.6,627.0" fill="none" stroke="#ff0000" stroke-width="2" stroke-linejoin="round" /><line x1="16.5" y1="709" x2="16.5" y2="713" stroke="#fff" shape-rendering="crispEdges"/><text x="15.5" y="722" fill="#ffffff" font-size="9.6"  textLength="46" lengthAdjust="spacingAndGlyphs">17 Jul 2014</text><line x1="80.5" y1="709" x2="80.5" y2="713" stroke="#fff" shape-rendering="crispEdges"/><text x="79.5" y="722" fill="#ffffff" font-size="9.6"  textLength="49" lengthAdjust="spacingAndGlyphs">18 Jul 06:15</text><line x1="144.5" y1="709" x2="144.5" y2="713" stroke="#fff" shape-rendering="crispEdges"/><text x="143.5" y="722" fill="#ffffff" font-size="9.6"  textLength="49" lengthAdjust="spacingAndGlyphs">18 Jul 14:15</text><line x1="208.5" y1="709" x2="208.5" y2="713" stroke="#fff" shape-rendering="crispEdges"/><text x="207.5" y="722" fill="#ffffff" font-size="9.6"  textLength="49" lengthAdjust="spacingAndGlyphs">18 Jul 22:15</text><line x1="272.5" y1="709" x2="272.5" y2="713" stroke="#fff" shape-rendering="crispEdges"/><text x="271.5" y="722" fill="#ffffff" font-size="9.6"  textLength="49" lengthAdjust="spacingAndGlyphs">21 Jul 06:15</text><line x1="336.5" y1="709" x2="336.5" y2="713" stroke="#fff" shape-rendering="crispEdges"/><text x="335.5" y="722" fill="#ffffff" font-size="9.6"  textLength="49" lengthAdjust="spacingAndGlyphs">21 Jul 14:15</text><line x1="400.5" y1="709" x2="400.5" y2="713" stroke="#fff" shape-rendering="crispEdges"/><text x="399.5" y="722" fill="#ffffff" font-size="9.6"  textLength="49" lengthAdjust="spacingAndGlyphs">21 Jul 22:15</text><line x1="464.5" y1="709" x2="464.5" y2="713" stroke="#fff" shape-rendering="crispEdges"/><text x="463.5" y="722" fill="#ffffff" font-size="9.6"  textLength="49" lengthAdjust="spacingAndGlyphs">22 Jul 06:15</text><g stroke="#000000" stroke-width="1" stroke-dasharray="3,3" stroke-dashoffset="1" shape-rendering="crispEdges"><line x1="687.5" y1="111" x2="687.5" y2="706"/><line x1="783.5" y1="111" x2="783.5" y2="706"/><line x1="879.5" y1="111" x2="879.5" y2="706"/><line x1="975.5" y1="111" x2="975.5" y2="706"/><line x1="1071.5" y1="111" x2="1071.5" y2="706"/><line x1="1167.5" y1="111" x2="1167.5" y2="706"/></g><line x1="675" y1="482.5" x2="1231" y2="482.5" stroke="#c0c0c0" stroke-dasharray="3,3" shape-rendering="crispEdges"/><line x1="676" y1="580.5" x2="1231" y2="580.5" stroke="#000" stroke-dasharray="18,6" shape-rendering="crispEdges"/><line x1="676" y1="627.5" x2="1231" y2="627.5" stroke="#000" stroke-dasharray="18,6" shape-rendering="crispEdges"/><line x1="676" y1="674.5" x2="1231" y2="674.5" stroke="#000" stroke-dasharray="18,6" shape-rendering="crispEdges"/><line x1="675" y1="368.5" x2="1231" y2="368.5" stroke="#778899" shape-rendering="crispEdges"/><path d="M675.5,130V150M679.5,130V150M683.5,127V168M687.5,130V161M691.5,131V252M695.5,233V266M699.5,241V264M703.5,241V253M707.5,235V319M711.5,288V320M715.5,289V326M719.5,305V334M723.5,300V331M727.5,294V325M731.5,301V337M735.5,284V333M739.5,289V302M743.5,278V299M747.5,288V318M751.5,262V289M755.5,249V275M759.5,253V292M763.5,260V288M767.5,270V287M771.5,283V300M775.5,287V296M779.5,276V307M783.5,268V293M787.5,270V282M791.5,260V278M795.5,262V311M799.5,299V343M803.5,317V337M807.5,325V343M811.5,312V356M815.5,299V325M819.5,299V349M823.5,321V348M827.5,321V337M831.5,321V348M835.5,335V371M839.5,335V361M843.5,296V337M847.5,286V340M851.5,332V361M855.5,325V351M859.5,318V336M863.5,298V325M867.5,310V323M871.5,318V376M875.5,350V421M879.5,399V424M883.5,393V440M887.5,392V435M891.5,390V421M895.5,404V431M899.5,362V418M903.5,367V378M907.5,364V374M911.5,357V367M915.5,353V368M919.5,329V367M923.5,346V367M927.5,362V379M931.5,367V387M935.5,374V382M939.5,328V382M943.5,376V415M947.5,380V396M951.5,369V389M955.5,354V372M959.5,335V351M963.5,335V347M967.5,342V347M971.5,337V387M975.5,273V335M979.5,308V335M983.5,289V317M987.5,288V330M991.5,310V329M995.5,294V314M999.5,281V304M1003.5,260V295M1007.5,272V290M1011.5,269V292M1015.5,276V314M1019.5,306V325M1023.5,307V330M1027.5,313V337M1031.5,322V344M1035.5,328V344M1039.5,318V344M1043.5,322V342M1047.5,330V342M1051.5,330V341M1055.5,335V343M1059.5,334V348M1063.5,330V339M1067.5,327V349M1071.5,345V369M1075.5,336V355M1079.5,349V367M1083.5,364V381M1087.5,347V371M1091.5,348V367M1095.5,336V369M1099.5,350V379M1103.5,353V377M1107.5,354V372M1111.5,351V367" stroke="#00ff00" fill="none" shape-rendering="crispEdges"/><g shape-rendering="crispEdges"><rect x="674.5" y="139.5" width="2" height="4" fill="#000" stroke="#00ff00"/><rect x="678.5" y="132.5" width="2" height="6" fill="#000" stroke="#00ff00"/><rect x="682.5" y="132.5" width="2" height="34" fill="#fff" stroke="#00ff00"/><rect x="686.5" y="150.5" width="2" height="8" fill="#000" stroke="#00ff00"/><rect x="690.5" y="150.5" width="2" height="87" fill="#fff" stroke="#00ff00"/><rect x="694.5" y="237.5" width="2" height="6" fill="#fff" stroke="#00ff00"/><rect x="698.5" y="244.5" width="2" height="6" fill="#fff" stroke="#00ff00"/><rect x="702.5" y="249.5" width="2" height="1" fill="#000" stroke="#00ff00"/><rect x="706.5" y="247.5" width="2" height="65" fill="#fff" stroke="#00ff00"/><rect x="710.5" y="289.5" width="2" height="23" fill="#000" stroke="#00ff00"/><rect x="714.5" y="289.5" width="2" height="24" fill="#fff" stroke="#00ff00"/><rect x="718.5" y="315.5" width="2" height="3" fill="#fff" stroke="#00ff00"/><rect x="722.5" y="319.5" width="2" height="4" fill="#fff" stroke="#00ff00"/><rect x="726.5" y="303.5" width="2" height="20" fill="#000" stroke="#00ff00"/><rect x="730.5" y="302.5" width="2" height="26" fill="#fff" stroke="#00ff00"/><rect x="734.5" y="294.5" width="2" height="34" fill="#000" stroke="#00ff00"/><rect x="738.5" y="293.5" width="2" height="4" fill="#fff" stroke="#00ff00"/><rect x="742.5" y="292.5" width="2" height="5" fill="#000" stroke="#00ff00"/><rect x="746.5" y="289.5" width="2" height="2" fill="#000" stroke="#00ff00"/><rect x="750.5" y="271.5" width="2" height="17" fill="#000" stroke="#00ff00"/><rect x="754.5" y="256.5" width="2" height="14" fill="#000" stroke="#00ff00"/><rect x="758.5" y="256.5" width="2" height="27" fill="#fff" stroke="#00ff00"/><rect x="762.5" y="274.5" width="2" height="9" fill="#000" stroke="#00ff00"/><rect x="766.5" y="271.5" width="2" height="12" fill="#fff" stroke="#00ff00"/><rect x="770.5" y="284.5" width="2" height="8" fill="#fff" stroke="#00ff00"/><rect x="774.5" y="290.5" width="2" height="1" fill="#000" stroke="#00ff00"/><rect x="778.5" y="289.5" width="2" height="17" fill="#fff" stroke="#00ff00"/><rect x="782.5" y="280.5" width="2" height="6" fill="#000" stroke="#00ff00"/><rect x="786.5" y="276.5" width="2" height="4" fill="#000" stroke="#00ff00"/><rect x="790.5" y="274.5" width="2" height="1" fill="#fff" stroke="#00ff00"/><rect x="794.5" y="274.5" width="2" height="34" fill="#fff" stroke="#00ff00"/><rect x="798.5" y="309.5" width="2" height="10" fill="#fff" stroke="#00ff00"/><rect x="802.5" y="320.5" width="2" height="9" fill="#fff" stroke="#00ff00"/><rect x="806.5" y="329.5" width="2" height="13" fill="#fff" stroke="#00ff00"/><rect x="810.5" y="321.5" width="2" height="20" fill="#000" stroke="#00ff00"/><rect x="814.5" y="303.5" width="2" height="17" fill="#000" stroke="#00ff00"/><rect x="818.5" y="303.5" width="2" height="33" fill="#fff" stroke="#00ff00"/><rect x="822.5" y="334.5" width="2" height="2" fill="#fff" stroke="#00ff00"/><rect x="826.5" y="325.5" width="2" height="8" fill="#000" stroke="#00ff00"/><rect x="830.5" y="325.5" width="2" height="13" fill="#fff" stroke="#00ff00"/><rect x="834.5" y="339.5" width="2" height="20" fill="#fff" stroke="#00ff00"/><rect x="838.5" y="339.5" width="2" height="20" fill="#000" stroke="#00ff00"/><rect x="842.5" y="300.5" width="2" height="36" fill="#000" stroke="#00ff00"/><rect x="846.5" y="301.5" width="2" height="33" fill="#fff" stroke="#00ff00"/><rect x="850.5" y="335.5" width="2" height="15" fill="#fff" stroke="#00ff00"/><rect x="854.5" y="336.5" width="2" height="14" fill="#000" stroke="#00ff00"/><rect x="858.5" y="321.5" width="2" height="14" fill="#000" stroke="#00ff00"/><rect x="862.5" y="318.5" width="2" height="2" fill="#000" stroke="#00ff00"/><rect x="866.5" y="318.5" width="2" height="2" fill="#fff" stroke="#00ff00"/><rect x="870.5" y="318.5" width="2" height="50" fill="#fff" stroke="#00ff00"/><rect x="874.5" y="368.5" width="2" height="50" fill="#fff" stroke="#00ff00"/><rect x="878.5" y="401.5" width="2" height="17" fill="#000" stroke="#00ff00"/><rect x="882.5" y="400.5" width="2" height="16" fill="#fff" stroke="#00ff00"/><rect x="886.5" y="400.5" width="2" height="14" fill="#000" stroke="#00ff00"/><rect x="890.5" y="399.5" width="2" height="15" fill="#fff" stroke="#00ff00"/><rect x="894.5" y="405.5" width="2" height="6" fill="#000" stroke="#00ff00"/><rect x="898.5" y="367.5" width="2" height="39" fill="#000" stroke="#00ff00"/><rect x="902.5" y="367.5" width="2" height="2" fill="#fff" stroke="#00ff00"/><rect x="906.5" y="366.5" width="2" height="3" fill="#000" stroke="#00ff00"/><rect x="910.5" y="360.5" width="2" height="3" fill="#000" stroke="#00ff00"/><rect x="914.5" y="355.5" width="2" height="4" fill="#000" stroke="#00ff00"/><rect x="918.5" y="351.5" width="2" height="3" fill="#000" stroke="#00ff00"/><rect x="922.5" y="351.5" width="2" height="12" fill="#fff" stroke="#00ff00"/><rect x="926.5" y="364.5" width="2" height="6" fill="#fff" stroke="#00ff00"/><rect x="930.5" y="369.5" width="2" height="6" fill="#fff" stroke="#00ff00"/><rect x="934.5" y="376.5" width="2" height="2" fill="#000" stroke="#00ff00"/><rect x="938.5" y="372.5" width="2" height="7" fill="#fff" stroke="#00ff00"/><rect x="942.5" y="379.5" width="2" height="14" fill="#fff" stroke="#00ff00"/><rect x="946.5" y="382.5" width="2" height="11" fill="#000" stroke="#00ff00"/><rect x="950.5" y="372.5" width="2" height="9" fill="#000" stroke="#00ff00"/><rect x="954.5" y="357.5" width="2" height="13" fill="#000" stroke="#00ff00"/><rect x="958.5" y="337.5" width="2" height="9" fill="#000" stroke="#00ff00"/><rect x="962.5" y="338.5" width="2" height="3" fill="#fff" stroke="#00ff00"/><rect x="966.5" y="343.5" width="2" height="2" fill="#fff" stroke="#00ff00"/><rect x="970.5" y="345.5" width="2" height="10" fill="#fff" stroke="#00ff00"/><rect x="974.5" y="312.5" width="2" height="7" fill="#fff" stroke="#00ff00"/><rect x="978.5" y="311.5" width="2" height="6" fill="#fff" stroke="#00ff00"/><rect x="982.5" y="298.5" width="2" height="13" fill="#000" stroke="#00ff00"/><rect x="986.5" y="298.5" width="2" height="24" fill="#fff" stroke="#00ff00"/><rect x="990.5" y="314.5" width="2" height="8" fill="#000" stroke="#00ff00"/><rect x="994.5" y="296.5" width="2" height="15" fill="#000" stroke="#00ff00"/><rect x="998.5" y="285.5" width="2" height="7" fill="#000" stroke="#00ff00"/><rect x="1002.5" y="273.5" width="2" height="9" fill="#000" stroke="#00ff00"/><rect x="1006.5" y="272.5" width="2" height="10" fill="#fff" stroke="#00ff00"/><rect x="1010.5" y="280.5" width="2" height="9" fill="#000" stroke="#00ff00"/><rect x="1014.5" y="285.5" width="2" height="24" fill="#fff" stroke="#00ff00"/><rect x="1018.5" y="310.5" width="2" height="13" fill="#fff" stroke="#00ff00"/><rect x="1022.5" y="319.5" width="2" height="4" fill="#000" stroke="#00ff00"/><rect x="1026.5" y="318.5" width="2" height="10" fill="#fff" stroke="#00ff00"/><rect x="1030.5" y="328.5" width="2" height="1" fill="#000" stroke="#00ff00"/><rect x="1034.5" y="328.5" width="2" height="10" fill="#fff" stroke="#00ff00"/><rect x="1038.5" y="324.5" width="2" height="13" fill="#000" stroke="#00ff00"/><rect x="1042.5" y="324.5" width="2" height="10" fill="#fff" stroke="#00ff00"/><rect x="1046.5" y="331.5" width="2" height="2" fill="#000" stroke="#00ff00"/><rect x="1050.5" y="331.5" width="2" height="5" fill="#fff" stroke="#00ff00"/><rect x="1054.5" y="337.5" width="2" height="3" fill="#fff" stroke="#00ff00"/><rect x="1058.5" y="335.5" width="2" height="5" fill="#000" stroke="#00ff00"/><rect x="1062.5" y="334.5" width="2" height="2" fill="#fff" stroke="#00ff00"/><rect x="1066.5" y="335.5" width="2" height="7" fill="#fff" stroke="#00ff00"/><rect x="1070.5" y="345.5" width="2" height="23" fill="#000" stroke="#00ff00"/><rect x="1074.5" y="345.5" width="2" height="5" fill="#fff" stroke="#00ff00"/><rect x="1078.5" y="350.5" width="2" height="16" fill="#fff" stroke="#00ff00"/><rect x="1082.5" y="368.5" width="2" height="1" fill="#fff" stroke="#00ff00"/><rect x="1086.5" y="353.5" width="2" height="16" fill="#000" stroke="#00ff00"/><rect x="1090.5" y="349.5" width="2" height="8" fill="#fff" stroke="#00ff00"/><rect x="1094.5" y="357.5" width="2" height="4" fill="#fff" stroke="#00ff00"/><rect x="1098.5" y="367.5" width="2" height="3" fill="#fff" stroke="#00ff00"/><rect x="1102.5" y="367.5" width="2" height="3" fill="#000" stroke="#00ff00"/><rect x="1106.5" y="358.5" width="2" height="9" fill="#000" stroke="#00ff00"/><rect x="1110.5" y="358.5" width="2" height="8" fill="#fff" stroke="#00ff00"/></g><g filter="url(#sh)"><line x1="1013" y1="271.5" x2="1207" y2="274.5" stroke="#c00000" stroke-width="3.2"/><line x1="890" y1="441" x2="1201" y2="440.5" stroke="#c00000" stroke-width="3.2"/><line x1="888" y1="427" x2="1003.9" y2="290.7" stroke="#c00000" stroke-width="3.2"/><path d="M1013,280 L1009.1,297.7 L996.2,286.7 Z" fill="#c00000"/><line x1="1022" y1="301" x2="1100.8" y2="360.6" stroke="#c00000" stroke-width="3.2"/><path d="M1112,369 L1094.1,366.1 L1104.4,352.6 Z" fill="#c00000"/><line x1="1120" y1="365" x2="1177.3" y2="293.0" stroke="#c00000" stroke-width="3.2"/><path d="M1186,282 L1182.7,299.8 L1169.4,289.2 Z" fill="#c00000"/><line x1="1192" y1="300" x2="1233.8" y2="432.6" stroke="#c00000" stroke-width="3.2"/><path d="M1238,446 L1225.1,433.3 L1241.3,428.2 Z" fill="#c00000"/></g><g fill="none" stroke="#000000" shape-rendering="crispEdges"><rect x="674.5" y="110.5" width="557" height="342"/><rect x="674.5" y="454.5" width="557" height="91"/><rect x="674.5" y="547.5" width="557" height="159"/></g><path d="M1110.5,111 h10 l-5,5 z" fill="#778899"/><rect x="689" y="112" width="203" height="11" fill="#ffffff" /><path d="M678,117 h7 l-3.5,4 z" fill="#000"/><text x="690" y="122" fill="#000000" font-size="9.6"  textLength="54" lengthAdjust="spacingAndGlyphs">NZDUSD,H1</text><text x="750" y="122" fill="#000000" font-size="9.6"  textLength="141" lengthAdjust="spacingAndGlyphs">0.86813 0.86841 0.86776 0.86776</text><line x1="1231" y1="115.5" x2="1235" y2="115.5" stroke="#000" shape-rendering="crispEdges"/><text x="1237" y="119" fill="#000000" font-size="9.6"  textLength="33" lengthAdjust="spacingAndGlyphs">0.87755</text><line x1="1231" y1="148.5" x2="1235" y2="148.5" stroke="#000" shape-rendering="crispEdges"/><text x="1237" y="152" fill="#000000" font-size="9.6"  textLength="33" lengthAdjust="spacingAndGlyphs">0.87625</text><line x1="1231" y1="181.5" x2="1235" y2="181.5" stroke="#000" shape-rendering="crispEdges"/><text x="1237" y="185" fill="#000000" font-size="9.6"  textLength="33" lengthAdjust="spacingAndGlyphs">0.87495</text><line x1="1231" y1="214.5" x2="1235" y2="214.5" stroke="#000" shape-rendering="crispEdges"/><text x="1237" y="218" fill="#000000" font-size="9.6"  textLength="33" lengthAdjust="spacingAndGlyphs">0.87365</text><line x1="1231" y1="248.5" x2="1235" y2="248.5" stroke="#000" shape-rendering="crispEdges"/><text x="1237" y="252" fill="#000000" font-size="9.6"  textLength="33" lengthAdjust="spacingAndGlyphs">0.87235</text><line x1="1231" y1="281.5" x2="1235" y2="281.5" stroke="#000" shape-rendering="crispEdges"/><text x="1237" y="285" fill="#000000" font-size="9.6"  textLength="33" lengthAdjust="spacingAndGlyphs">0.87110</text><line x1="1231" y1="314.5" x2="1235" y2="314.5" stroke="#000" shape-rendering="crispEdges"/><text x="1237" y="318" fill="#000000" font-size="9.6"  textLength="33" lengthAdjust="spacingAndGlyphs">0.86980</text><line x1="1231" y1="348.5" x2="1235" y2="348.5" stroke="#000" shape-rendering="crispEdges"/><text x="1237" y="352" fill="#000000" font-size="9.6"  textLength="33" lengthAdjust="spacingAndGlyphs">0.86850</text><line x1="1231" y1="381.5" x2="1235" y2="381.5" stroke="#000" shape-rendering="crispEdges"/><text x="1237" y="385" fill="#000000" font-size="9.6"  textLength="33" lengthAdjust="spacingAndGlyphs">0.86720</text><line x1="1231" y1="414.5" x2="1235" y2="414.5" stroke="#000" shape-rendering="crispEdges"/><text x="1237" y="418" fill="#000000" font-size="9.6"  textLength="33" lengthAdjust="spacingAndGlyphs">0.86590</text><line x1="1231" y1="447.5" x2="1235" y2="447.5" stroke="#000" shape-rendering="crispEdges"/><text x="1237" y="451" fill="#000000" font-size="9.6"  textLength="33" lengthAdjust="spacingAndGlyphs">0.86460</text><rect x="1233" y="363" width="40" height="11" fill="#000000" /><text x="1237" y="372" fill="#ffffff" font-size="9.6"  textLength="33" lengthAdjust="spacingAndGlyphs">0.86776</text><text x="1236" y="466" fill="#000" font-size="9.6"  textLength="37" lengthAdjust="spacingAndGlyphs">0.003362</text><text x="1237" y="486" fill="#000" font-size="9.6"  textLength="19" lengthAdjust="spacingAndGlyphs">0.00</text><text x="1235" y="543" fill="#000" font-size="9.6"  textLength="35" lengthAdjust="spacingAndGlyphs">-0.00789</text><text x="1236" y="558" fill="#000" font-size="9.6" >0</text><text x="1236" y="584" fill="#000" font-size="9.6" >-20</text><text x="1236" y="631" fill="#000" font-size="9.6" >-50</text><text x="1236" y="678" fill="#000" font-size="9.6" >-80</text><text x="1236" y="703" fill="#000" font-size="9.6" >-100</text><text x="680" y="468" fill="#000" font-size="9.6"  textLength="84" lengthAdjust="spacingAndGlyphs">AO_Zotik -0.001285</text><text x="679" y="560" fill="#000" font-size="9.6"  textLength="161" lengthAdjust="spacingAndGlyphs">WPR_VSmark(21|55|77|277) -84.6567</text><path d="M675.0,486.4 C679.1,487.2 690.5,489.7 699.4,491.0 C708.3,492.3 719.8,494.1 728.6,494.0 C737.4,493.9 743.2,492.2 752.4,490.4 C761.6,488.6 776.5,484.9 784.0,483.0 C791.5,481.1 790.8,480.1 797.5,479.0 C804.2,477.9 815.2,476.8 824.0,476.6 C832.8,476.4 841.6,476.9 850.4,477.7 C859.2,478.5 869.9,480.5 877.0,481.6 C884.1,482.7 886.4,484.3 893.0,484.3 C899.6,484.3 908.4,482.3 916.7,481.6 C925.0,480.9 935.8,480.5 943.0,480.3 C950.2,480.1 952.8,480.7 960.0,480.3 C967.2,479.9 977.7,478.6 986.5,477.7 C995.3,476.8 1005.1,474.6 1013.0,475.0 C1020.9,475.4 1025.2,478.7 1034.0,480.0 C1042.8,481.3 1056.2,482.0 1066.0,483.0 C1075.8,484.0 1085.0,485.6 1092.5,486.0 C1100.0,486.4 1107.9,485.7 1111.0,485.6" fill="none" stroke="#000000" stroke-width="1" stroke-linejoin="round" /><path d="M675.0,491.0 C677.8,491.7 685.2,492.8 691.5,495.0 C697.8,497.2 706.5,501.7 712.7,504.0 C718.9,506.3 722.4,507.9 728.6,508.7 C734.8,509.5 742.7,509.2 749.8,508.7 C756.9,508.2 763.0,506.4 771.0,505.5 C779.0,504.6 788.7,503.7 797.5,503.0 C806.3,502.3 815.2,502.0 824.0,501.5 C832.8,501.0 843.4,500.4 850.4,500.0 C857.4,499.6 859.8,499.1 866.0,499.4 C872.2,499.6 879.0,501.8 887.5,501.5 C896.0,501.2 907.5,498.6 916.7,497.5 C926.0,496.4 935.8,495.6 943.0,495.0 C950.2,494.4 952.8,494.9 960.0,493.6 C967.2,492.3 977.7,489.1 986.5,487.0 C995.3,484.9 1005.1,482.0 1013.0,481.0 C1020.9,480.0 1025.2,480.7 1034.0,481.0 C1042.8,481.3 1057.2,482.3 1066.0,483.0 C1074.8,483.7 1079.5,484.6 1087.0,485.0 C1094.5,485.4 1107.0,485.5 1111.0,485.6" fill="none" stroke="#008000" stroke-width="2.2" stroke-linejoin="round" /><path d="M675.0,508.7 C677.1,508.4 683.4,503.8 687.5,506.8 C691.6,509.8 696.1,522.5 699.4,526.7 C702.7,530.9 704.5,530.0 707.4,532.0 C710.3,534.0 713.6,537.9 716.7,539.0 C719.8,540.1 721.8,541.1 726.0,538.6 C730.2,536.1 736.5,529.3 741.8,524.0 C747.1,518.7 753.7,510.3 757.7,506.8 C761.7,503.3 762.2,503.8 765.7,502.8 C769.2,501.8 774.1,503.1 779.0,501.0 C783.9,498.9 789.7,490.8 794.8,490.4 C799.9,490.0 804.5,498.6 809.4,498.9 C814.3,499.2 819.4,492.8 824.0,492.0 C828.6,491.2 833.0,494.5 837.0,494.0 C841.0,493.5 844.2,489.4 847.8,488.8 C851.4,488.2 855.1,490.9 858.4,490.4 C861.7,489.9 864.5,485.1 867.6,485.6 C870.7,486.1 874.4,490.1 877.0,493.6 C879.6,497.1 880.9,504.4 883.5,506.8 C886.1,509.2 889.5,509.1 892.8,508.0 C896.1,506.9 900.3,502.8 903.4,500.0 C906.5,497.2 907.6,494.1 911.4,491.5 C915.2,488.9 922.5,485.3 926.0,484.3 C929.5,483.3 928.3,484.9 932.5,485.6 C936.7,486.4 946.1,489.9 951.0,488.8 C955.9,487.7 958.2,481.0 961.7,479.0 C965.2,477.0 968.3,479.0 972.0,477.0 C975.7,475.0 979.2,469.3 983.8,467.0 C988.4,464.7 995.3,464.2 999.7,463.0 C1004.1,461.8 1006.8,459.0 1010.3,459.7 C1013.8,460.4 1017.0,463.8 1021.0,467.0 C1025.0,470.2 1029.6,476.6 1034.0,479.0 C1038.4,481.4 1042.1,480.7 1047.4,481.6 C1052.7,482.5 1059.8,482.4 1066.0,484.3 C1072.2,486.2 1079.2,491.6 1084.5,492.8 C1089.8,494.0 1093.3,491.5 1097.7,491.5 C1102.1,491.5 1108.8,492.6 1111.0,492.8" fill="none" stroke="#ff0000" stroke-width="2" stroke-linejoin="round" /><polyline points="675.0,670.0 679.6,662.4 683.5,688.0 687.5,680.0 691.5,688.0 699.4,693.6 707.4,700.0 712.7,692.0 720.6,699.0 728.6,692.0 734.0,685.7 739.0,684.0 744.5,672.5 749.8,667.0 756.4,644.6 761.7,664.5 765.7,656.6 771.0,669.8 775.0,631.4 779.0,659.0 782.9,616.8 790.8,593.0 794.8,654.0 800.0,672.5 806.7,703.0 816.0,627.4 821.3,675.0 826.6,659.0 835.9,684.0 843.8,605.0 851.8,677.7 859.7,632.7 866.3,630.0 874.3,701.6 878.2,680.4 880.0,683.5 883.2,694.0 887.4,662.3 891.7,689.8 899.0,629.4 901.2,631.6 905.4,628.4 909.7,623.0 919.2,614.6 924.5,629.4 931.9,635.8 936.1,629.4 943.6,653.8 959.4,563.8 966.9,571.2 972.2,593.4 975.3,594.5 983.4,575.4 988.0,602.0 995.5,575.4 1000.0,559.5 1007.7,569.0 1013.0,577.0 1018.3,606.0 1026.2,627.4 1035.5,646.0 1039.5,627.4 1044.8,640.7 1051.4,638.0 1055.4,699.0 1060.7,680.4 1067.3,695.0 1071.3,669.8 1079.2,700.3 1087.2,660.5 1099.0,685.7 1107.0,654.0 1111.0,673.8" fill="none" stroke="#ff0000" stroke-width="1" stroke-linejoin="round" /><polyline points="675.0,668.5 679.6,665.8 684.9,693.6 688.8,684.4 696.8,696.3 708.7,699.0 714.0,692.3 720.6,699.0 728.6,693.0 736.5,684.4 744.5,684.4 755.0,668.5 763.0,677.7 773.6,684.4 782.9,675.0 790.8,676.4 796.0,692.3 806.7,704.2 814.7,683.0 824.0,696.3 834.5,700.3 843.8,676.4 851.8,697.6 861.0,683.0 867.6,683.0 874.3,703.0 880.0,696.2 883.2,698.3 887.4,683.5 891.7,697.2 899.0,668.6 907.5,665.5 911.8,641.0 919.2,636.9 924.5,646.4 928.7,646.4 931.9,652.8 936.1,648.5 943.6,666.5 959.4,622.0 966.9,626.3 971.1,634.7 975.3,600.8 983.4,580.7 987.6,604.0 995.5,581.8 1000.0,568.0 1003.7,560.0 1013.0,573.0 1021.0,603.6 1028.9,610.0 1036.8,603.6 1042.0,611.5 1050.0,610.0 1060.7,614.0 1071.3,622.0 1077.9,630.0 1084.5,635.4 1087.2,627.4 1097.7,644.6 1107.0,635.4 1111.0,647.3" fill="none" stroke="#1e90ff" stroke-width="1" stroke-linejoin="round" /><polyline points="675.0,667.0 683.5,696.3 687.5,684.4 696.8,696.3 708.7,699.0 714.0,692.3 720.6,699.0 728.6,693.0 736.5,684.4 744.5,684.4 755.0,668.5 763.0,677.7 773.6,684.4 782.9,675.0 790.8,676.4 796.0,692.3 806.7,704.2 814.7,683.0 824.0,696.3 834.5,700.3 843.8,676.4 851.8,697.6 861.0,683.0 867.6,683.0 874.3,703.0 880.0,697.0 883.2,699.0 887.4,690.0 891.7,698.0 899.0,678.0 907.5,677.0 919.2,672.9 924.5,679.2 935.0,681.4 943.6,688.8 954.2,675.0 960.5,667.6 966.9,659.0 971.1,663.3 975.3,645.3 983.4,634.7 987.6,647.5 994.4,633.7 997.6,586.0 1000.0,586.0 1003.7,578.4 1011.7,586.4 1017.0,603.6 1026.2,614.0 1035.5,620.8 1039.5,611.5 1044.8,618.0 1055.4,624.8 1066.0,620.8 1074.0,626.0 1080.5,642.0 1084.5,643.3 1087.2,627.4 1099.0,644.6 1107.0,634.0 1111.0,642.0" fill="none" stroke="#9932cc" stroke-width="1" stroke-linejoin="round" /><polyline points="675.0,636.7 679.6,634.0 683.5,651.3 687.5,643.3 691.5,687.0 699.4,692.3 707.4,701.6 711.4,693.6 716.7,700.3 727.3,692.3 731.2,701.6 735.2,687.0 744.5,683.0 755.0,671.0 765.7,681.7 779.0,692.3 784.2,679.0 796.0,693.6 806.7,704.2 814.7,684.4 824.0,696.3 834.5,700.3 843.8,677.7 851.8,697.6 861.0,684.4 869.0,685.7 874.3,703.0 880.0,698.3 884.2,700.4 887.4,692.0 891.7,699.4 899.0,681.4 907.5,679.2 919.2,676.7 924.5,681.4 935.0,683.5 943.6,689.8 958.4,672.9 969.0,675.0 971.1,677.0 975.3,666.5 983.4,659.1 987.6,666.5 1000.0,653.8 1003.7,651.3 1011.7,654.0 1019.6,665.8 1028.9,668.5 1036.8,669.8 1039.5,668.5 1050.0,669.8 1055.4,672.5 1063.3,671.0 1071.3,673.8 1080.5,681.7 1085.8,676.4 1099.0,683.0 1107.0,679.0 1111.0,680.4" fill="none" stroke="#000000" stroke-width="2" stroke-linejoin="round" /><line x1="674.5" y1="706" x2="674.5" y2="710" stroke="#000" shape-rendering="crispEdges"/><text x="674.5" y="719" fill="#000000" font-size="9.6"  textLength="46" lengthAdjust="spacingAndGlyphs">15 Jul 2014</text><line x1="738.5" y1="706" x2="738.5" y2="710" stroke="#000" shape-rendering="crispEdges"/><text x="738.5" y="719" fill="#000000" font-size="9.6"  textLength="49" lengthAdjust="spacingAndGlyphs">16 Jul 13:00</text><line x1="802.5" y1="706" x2="802.5" y2="710" stroke="#000" shape-rendering="crispEdges"/><text x="802.5" y="719" fill="#000000" font-size="9.6"  textLength="49" lengthAdjust="spacingAndGlyphs">17 Jul 05:00</text><line x1="866.5" y1="706" x2="866.5" y2="710" stroke="#000" shape-rendering="crispEdges"/><text x="866.5" y="719" fill="#000000" font-size="9.6"  textLength="49" lengthAdjust="spacingAndGlyphs">17 Jul 21:00</text><line x1="930.5" y1="706" x2="930.5" y2="710" stroke="#000" shape-rendering="crispEdges"/><text x="930.5" y="719" fill="#000000" font-size="9.6"  textLength="49" lengthAdjust="spacingAndGlyphs">18 Jul 13:00</text><line x1="994.5" y1="706" x2="994.5" y2="710" stroke="#000" shape-rendering="crispEdges"/><text x="994.5" y="719" fill="#000000" font-size="9.6"  textLength="49" lengthAdjust="spacingAndGlyphs">21 Jul 05:00</text><line x1="1058.5" y1="706" x2="1058.5" y2="710" stroke="#000" shape-rendering="crispEdges"/><text x="1058.5" y="719" fill="#000000" font-size="9.6"  textLength="49" lengthAdjust="spacingAndGlyphs">21 Jul 21:00</text>
</svg></body></html>
